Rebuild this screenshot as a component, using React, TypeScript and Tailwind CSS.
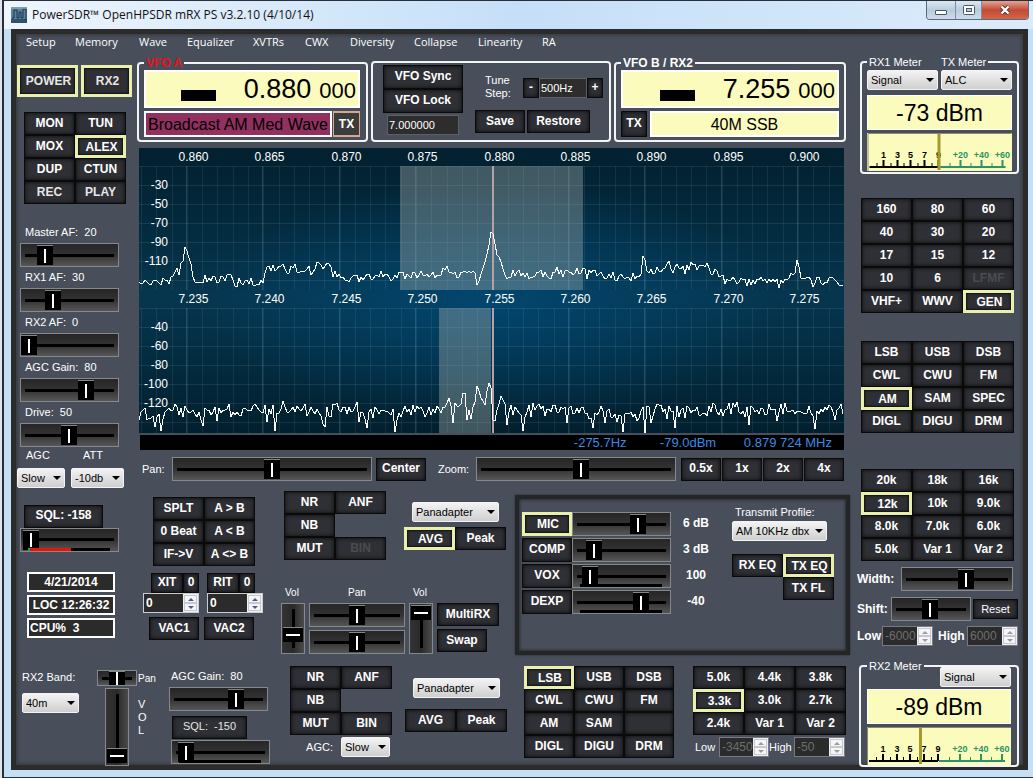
import { useId, type ReactNode } from "react";
import clsx from "clsx";

const sans = "font-['Liberation_Sans',Arial,sans-serif]";
const segoe = "font-['Open_Sans','Noto_Sans',sans-serif]";

/* ---------- controls ---------- */

function Btn({
  children,
  on,
  disabled,
  dim,
  className = "h-[23px] w-[51px]",
  label,
}: {
  children?: ReactNode;
  on?: boolean;
  disabled?: boolean;
  dim?: boolean;
  className?: string;
  label?: string;
}) {
  return (
    <button
      type="button"
      disabled={disabled}
      aria-pressed={on}
      aria-label={label}
      className={clsx(
        "shrink-0 bg-[#2f3035] text-center text-[12px] leading-none font-bold whitespace-nowrap",
        on
          ? "border-[3px] border-[#e9f0ab] pl-[2px] shadow-[inset_0_0_2px_1px_#111]"
          : "pb-[2px] shadow-[inset_0_0_0_1px_#0a0a0b,inset_0_0_4px_1px_#0a0a0b]",
        disabled ? "text-[#4a4b50]" : dim ? "text-[#e6e6e6]" : "text-white",
        className,
      )}
    >
      {children}
    </button>
  );
}

function Slider({
  label,
  value,
  slim,
  className = "w-[99px]",
}: {
  label: string;
  value: number;
  slim?: boolean;
  className?: string;
}) {
  return (
    <input
      type="range"
      aria-label={label}
      defaultValue={value}
      className={clsx(
        "block shrink-0 appearance-none border border-[#85888c]",
        "[background:linear-gradient(#000,#000)_center/calc(100%-8px)_3px_no-repeat,linear-gradient(#262626,#333_50%,#565656)]",
        "[&::-webkit-slider-thumb]:w-[16px] [&::-webkit-slider-thumb]:appearance-none",
        "[&::-webkit-slider-thumb]:border-t [&::-webkit-slider-thumb]:border-[#7d8a88]",
        "[&::-webkit-slider-thumb]:[background:linear-gradient(#fff,#fff)_center/2px_14px_no-repeat,#000]",
        slim ? "h-[16px] [&::-webkit-slider-thumb]:h-[14px]" : "h-[24px] [&::-webkit-slider-thumb]:h-[20px]",
        className,
      )}
    />
  );
}

function VSlider({ label, value, className }: { label: string; value: number; className: string }) {
  return (
    <input
      type="range"
      aria-label={label}
      defaultValue={value}
      className={clsx(
        "block w-[24px] shrink-0 appearance-none border border-[#85888c] [direction:rtl] [writing-mode:vertical-lr]",
        "[background:linear-gradient(#000,#000)_center/3px_calc(100%-10px)_no-repeat,linear-gradient(90deg,#333,#2a2a2a_50%,#4a4a4a)]",
        "[&::-webkit-slider-thumb]:h-[15px] [&::-webkit-slider-thumb]:w-[20px] [&::-webkit-slider-thumb]:appearance-none",
        "[&::-webkit-slider-thumb]:border-t [&::-webkit-slider-thumb]:border-[#7d8a88]",
        "[&::-webkit-slider-thumb]:[background:linear-gradient(#fff,#fff)_center/14px_2px_no-repeat,#000]",
        className,
      )}
    />
  );
}

// slider with a level strip along its lower edge
function LevelSlider({ label, value, level }: { label: string; value: number; level?: boolean }) {
  return (
    <div className="relative w-fit">
      <Slider label={label} value={value} />
      <div className="absolute right-[9px] bottom-px left-[8px] flex h-[3px] bg-black">
        {level && <div className="w-[2px] bg-[#22a04a]" />}
        {level && <div className="w-1/2 bg-[#e8140c]" />}
      </div>
    </div>
  );
}

function LabelledSlider({ text, value }: { text: string; value: number }) {
  return (
    <div className="flex h-[45px] flex-col gap-[3px]">
      <span className="pl-[5px] text-[11px] leading-[15px] whitespace-pre">{text}</span>
      <Slider label={text} value={value} />
    </div>
  );
}

function Select({ label, options, className }: { label: string; options: string[]; className: string }) {
  return (
    <span className={clsx("relative block h-[20px] shrink-0", className)}>
      <select
        aria-label={label}
        className="block h-full w-full appearance-none rounded-[2px] border border-[#f4f4f4] bg-linear-to-b from-[#f3f3f3] to-[#cfcfcf] pl-[3px] text-[11px] text-black"
      >
        {options.map((o) => (
          <option key={o}>{o}</option>
        ))}
      </select>
      <svg viewBox="0 0 8 4" className="pointer-events-none absolute top-[8px] right-[4px] h-[4px] w-[8px]">
        <path d="M0 0h8L4 4z" fill="#000" />
      </svg>
    </span>
  );
}

function Spinner({
  label,
  value,
  disabled,
  className,
}: {
  label: string;
  value: string;
  disabled?: boolean;
  className: string;
}) {
  const arrow = disabled ? "#9a9a9a" : "#4d5a8a";
  return (
    <span className={clsx("flex h-[20px] shrink-0 border", disabled ? "border-[#777a80]" : "border-[#c9ccd0]", className)}>
      <input
        type="text"
        aria-label={label}
        defaultValue={value}
        disabled={disabled}
        className={clsx(
          "min-w-0 flex-1 bg-[#2b2b2b] pl-[2px] text-[12px]",
          disabled ? "font-normal text-[#6d6e70]" : "font-bold text-white",
        )}
      />
      <span className="flex w-[15px] flex-col bg-[#f0f0f0] p-px">
        <button type="button" disabled={disabled} aria-label={`${label} up`} className="flex flex-1 items-center justify-center border border-[#c4c8d4] bg-[#f5f5f5]">
          <svg viewBox="0 0 6 3" className="h-[3px] w-[6px]">
            <path d="M3 0l3 3H0z" fill={arrow} />
          </svg>
        </button>
        <button type="button" disabled={disabled} aria-label={`${label} down`} className="flex flex-1 items-center justify-center border border-[#c4c8d4] bg-[#f5f5f5]">
          <svg viewBox="0 0 6 3" className="h-[3px] w-[6px]">
            <path d="M0 0h6L3 3z" fill={arrow} />
          </svg>
        </button>
      </span>
    </span>
  );
}

type Cell = string | null;

function ButtonGrid({
  cells,
  active = [],
  disabled = [],
  dim = [],
  className,
}: {
  cells: Cell[];
  active?: string[];
  disabled?: string[];
  dim?: string[];
  className: string;
}) {
  return (
    <div className={clsx("grid shrink-0", className)}>
      {cells.map((c, i) =>
        c === null ? (
          <span key={i} />
        ) : (
          <Btn
            key={i}
            on={active.includes(c)}
            disabled={disabled.includes(c)}
            dim={dim.includes(c)}
            label={c || "unused"}
            className="h-[23px] w-full"
          >
            {c}
          </Btn>
        ),
      )}
    </div>
  );
}

function Group({ legend, children, className }: { legend: ReactNode; children: ReactNode; className: string }) {
  return (
    <fieldset className={clsx("min-w-0 shrink-0 rounded-[4px] border-2 border-[#f2f4f6]", className)}>
      <legend className="px-[2px] leading-[14px] whitespace-pre">{legend}</legend>
      {children}
    </fieldset>
  );
}

/* ---------- window frame ---------- */

function TitleBar() {
  return (
    <header className="flex h-[28px] items-start justify-between bg-linear-to-r from-[#eef5fc] via-[#c5dff8] to-[#dcebfa] pr-[4px] pl-[7px]">
      <div className="flex items-center gap-[5px] pt-[5px]">
        <svg viewBox="0 0 16 16" className="h-[16px] w-[16px]">
          <rect width="16" height="16" fill="#5d8199" />
          <rect y="12" width="16" height="4" fill="#30536b" />
          <path d="M1 11h2V3h3v8h2V5h2v6h2V2h3v12" fill="none" stroke="#17374d" />
          <path d="M0 1h16" stroke="#9fc0d4" />
        </svg>
        <h1 className={clsx("text-[12px] leading-[18px] text-[#111]", segoe)}>
          PowerSDR™ OpenHPSDR mRX PS v3.2.10 (4/10/14)
        </h1>
      </div>
      <div className="flex h-[19px] overflow-hidden rounded-b-[4px] border border-t-0 border-[#5a6b80]">
        <button type="button" aria-label="Minimize" className="flex w-[28px] items-center justify-center bg-linear-to-b from-[#dbe7f3] via-[#b9cbdd] to-[#cddcec]">
          <span className="mt-[5px] h-[5px] w-[12px] rounded-[1px] border border-[#48566a] bg-white" />
        </button>
        <button type="button" aria-label="Maximize" className="flex w-[27px] items-center justify-center border-x border-[#7d8fa5] bg-linear-to-b from-[#dbe7f3] via-[#b9cbdd] to-[#cddcec]">
          <svg viewBox="0 0 12 10" className="h-[10px] w-[12px]">
            <rect x=".5" y=".5" width="11" height="9" rx="1" fill="#fff" stroke="#48566a" />
            <rect x="3.5" y="3.5" width="5" height="3" fill="#b9cbdd" stroke="#48566a" />
          </svg>
        </button>
        <button type="button" aria-label="Close" className="flex w-[46px] items-center justify-center bg-linear-to-b from-[#e0a396] via-[#c34a35] to-[#d2664a]">
          <svg viewBox="0 0 12 10" className="h-[10px] w-[12px]">
            <path d="M2.500 1.500l7 7M9.500 1.500l-7 7" stroke="#5a2a26" strokeWidth="4" />
            <path d="M2.500 1.500l7 7M9.500 1.500l-7 7" stroke="#fff" strokeWidth="2.400" />
          </svg>
        </button>
      </div>
    </header>
  );
}

const menu = [
  { text: "Setup", w: "w-[49px]" },
  { text: "Memory", w: "w-[64px]" },
  { text: "Wave", w: "w-[48px]" },
  { text: "Equalizer", w: "w-[66px]" },
  { text: "XVTRs", w: "w-[52px]" },
  { text: "CWX", w: "w-[45px]" },
  { text: "Diversity", w: "w-[64px]" },
  { text: "Collapse", w: "w-[64px]" },
  { text: "Linearity", w: "w-[64px]" },
  { text: "RA", w: "w-[40px]" },
];

function MenuBar() {
  return (
    <nav className={clsx("flex h-[20px] pt-[6px] pl-[9px] text-[11px] leading-[14px]", segoe)}>
      {menu.map((m) => (
        <button key={m.text} type="button" className={clsx("shrink-0 text-left", m.w)}>
          {m.text}
        </button>
      ))}
    </nav>
  );
}

/* ---------- VFOs ---------- */

function Frequency({ mhz, hz }: { mhz: string; hz: string }) {
  return (
    <div className="flex h-[38px] items-center justify-end border-2 border-white bg-[#fbfbbe] pr-[2px] text-black">
      <span className="mt-[13px] mr-[28px] h-[11px] w-[35px] bg-black" />
      <span className="text-[27px] leading-[38px]">{mhz}</span>
      <span className="pt-[4px] pl-[8px] text-[22px] leading-[34px]">{hz}</span>
    </div>
  );
}

function VfoRow() {
  return (
    <div className="-ml-[2px] flex w-[709px] items-end gap-[3px]">
      <Group
        legend={<span className="text-[12px] font-bold text-[#e8101c]">VFO A</span>}
        className="h-[87px] w-[231px] pr-[6px] pl-[5px]"
      >
        <Frequency mhz="0.880" hz="000" />
        <div className="mt-[3px] flex justify-between">
          <div className="h-[26px] w-[188px] border-2 border-white bg-[#92305f] text-center text-[16px] leading-[23px] whitespace-nowrap text-black">
            Broadcast AM Med Wave
          </div>
          <button type="button" className="h-[26px] w-[27px] border border-y-2 border-[#d9a58c] bg-[#3b3c3c] text-[12px] font-bold">
            TX
          </button>
        </div>
      </Group>

      <div className="flex h-[81px] w-[240px] shrink-0 rounded-[4px] border-2 border-[#f2f4f6] pt-[2px] pl-[10px]">
        <div className="flex w-[80px] flex-col">
          <Btn className="h-[24px] w-[80px]">VFO Sync</Btn>
          <Btn className="h-[24px] w-[80px]">VFO Lock</Btn>
          <input
            type="text"
            aria-label="Saved frequency"
            defaultValue="7.000000"
            className="mt-[2px] ml-[4px] h-[20px] w-[72px] border border-[#5c5f64] bg-[#2d2d2e] pl-px text-[11px]"
          />
        </div>
        <div className="pl-[12px]">
          <div className="flex h-[43px] items-center">
            <span className="w-[38px] pl-[10px] text-[11px] leading-[13px]">Tune Step:</span>
            <div className="ml-[10px] flex pt-[2px]">
              <Btn className="h-[20px] w-[16px]" label="Step down">-</Btn>
              <input
                type="text"
                aria-label="Tune step"
                defaultValue="500Hz"
                className="h-[20px] w-[48px] border border-[#5c5f64] bg-[#2d2d2e] pl-px text-[11px]"
              />
              <Btn className="h-[20px] w-[16px]" label="Step up">+</Btn>
            </div>
          </div>
          <div className="mt-[2px] flex gap-[2px]">
            <Btn className="h-[23px] w-[50px]">Save</Btn>
            <Btn className="h-[23px] w-[63px]">Restore</Btn>
          </div>
        </div>
      </div>

      <Group legend={<span className="text-[12px] font-bold">VFO B / RX2</span>} className="h-[87px] w-[232px] pr-[5px] pl-[5px]">
        <div className="w-[218px]">
          <Frequency mhz="7.255" hz="000" />
        </div>
        <div className="mt-[3px] flex justify-between">
          <Btn className="h-[26px] w-[26px]">TX</Btn>
          <div className="h-[26px] w-[189px] border-2 border-white bg-[#fbfbbe] text-center text-[16px] leading-[23px] text-black">
            40M SSB
          </div>
        </div>
      </Group>
    </div>
  );
}

/* ---------- spectrum ---------- */

type Point = [number, number];

function noise(seed: number) {
  let s = seed;
  return () => {
    s = (s * 1103515245 + 12345) % 2147483648;
    return s / 2147483648 - 0.5;
  };
}

function levelAt(env: Point[], x: number) {
  for (let i = 1; i < env.length; i++) {
    const [x0, y0] = env[i - 1];
    const [x1, y1] = env[i];
    if (x <= x1) return y0 + ((y1 - y0) * (x - x0)) / (x1 - x0);
  }
  return env[env.length - 1][1];
}

function trace(env: Point[], marks: Point[], amp: number, seed: number) {
  const rnd = noise(seed);
  const pts: Point[] = [];
  for (let x = 0; x <= 705; x += 2) {
    pts.push([x, Math.round(levelAt(env, x) + rnd() * amp + rnd() * amp)]);
  }
  for (const [mx, my] of marks) {
    const p = pts[Math.round(mx / 2)];
    if (p) p[1] = my;
  }
  return pts.map((p) => p.join(",")).join(" ");
}

const rx1Env: Point[] = [
  [0, 132], [18, 135], [32, 131], [39, 125], [43, 116], [47, 101], [50, 115], [54, 125], [57, 132],
  [88, 129], [95, 133], [124, 134], [127, 122], [165, 122], [180, 119], [192, 121], [199, 129],
  [300, 127], [308, 122], [316, 126], [333, 124], [340, 134], [347, 111], [353, 84], [357, 104],
  [364, 122], [370, 129], [381, 123], [390, 130], [400, 122], [408, 129], [420, 124], [460, 125],
  [478, 131], [500, 127], [503, 125], [505, 108], [508, 123], [530, 120], [574, 120], [580, 126],
  [584, 133], [630, 132], [642, 134], [655, 126], [658, 112], [662, 125], [675, 134], [705, 133],
];
const rx1Marks: Point[] = [[46, 99], [352, 84], [504, 108], [658, 112], [308, 118], [338, 137], [640, 140]];

const rx2Env: Point[] = [
  [0, 264], [20, 267], [30, 261], [60, 264], [200, 262], [290, 263], [310, 257], [327, 252], [333, 264],
  [339, 239], [346, 256], [350, 235], [355, 272], [360, 256], [375, 266], [400, 260], [470, 266],
  [500, 264], [600, 262], [705, 263],
];
const rx2Marks: Point[] = [
  [16, 279], [22, 283], [64, 278], [78, 273], [128, 274], [136, 283], [184, 276], [186, 279], [220, 274],
  [228, 280], [256, 284], [258, 272], [314, 275], [328, 272], [332, 271], [338, 238], [340, 243],
  [342, 250], [344, 253], [346, 257], [348, 243], [350, 235], [352, 240],
  [354, 272], [368, 277], [384, 283], [416, 257], [428, 275], [454, 280], [466, 275], [484, 284],
  [506, 285], [512, 275], [536, 280], [598, 254], [610, 277], [638, 273], [676, 281], [696, 272],
];

const rx1Freqs = ["0.860", "0.865", "0.870", "0.875", "0.880", "0.885", "0.890", "0.895", "0.900"];
const rx2Freqs = ["7.235", "7.240", "7.245", "7.250", "7.255", "7.260", "7.265", "7.270", "7.275"];

function Panadapter({ top, height, freqs, levels }: { top: number; height: number; freqs: string[]; levels: string[] }) {
  const majors = freqs.map((_, i) => 47.5 + Math.round(i * 76.4));
  const minors = Array.from({ length: 46 }, (_, i) => Math.round(2 + i * 15.280) + 0.5);
  return (
    <g>
      {minors.map((x) => (
        <path key={x} d={`M${x} ${top}v${height}`} stroke="#9fc8dc" strokeOpacity=".1" />
      ))}
      {majors.map((x) => (
        <path key={x} d={`M${x} ${top}v${height}`} stroke="#9fc8dc" strokeOpacity=".2" />
      ))}
      {[0, 1, 2, 3, 4, 5, 6].map((i) => (
        <path key={i} d={`M0 ${top + i * 19 + 0.5}h705`} stroke="#9fc8dc" strokeOpacity=".12" />
      ))}
      {freqs.map((f, i) => (
        <text key={f} x={majors[i] + 7} y={top - 5} textAnchor="middle">
          {f}
        </text>
      ))}
      {levels.map((l, i) => (
        <text key={l} x="29" y={top + 23 + i * 19} textAnchor="end">
          {l}
        </text>
      ))}
    </g>
  );
}

function Display() {
  return (
    <div className="mt-[6px] w-[705px]">
      <svg viewBox="0 0 705 285" className="block h-auto w-full" fill="#fff" fontSize="12">
        <defs>
          <linearGradient id="sky" x1="0" y1="0" x2="0" y2="1">
            <stop offset="0" stopColor="#02202f" />
            <stop offset=".25" stopColor="#03293c" />
            <stop offset=".52" stopColor="#06364f" />
            <stop offset=".75" stopColor="#032b3f" />
            <stop offset="1" stopColor="#021f2e" />
          </linearGradient>
          <radialGradient id="glow" cx=".5" cy=".54" r=".42">
            <stop offset="0" stopColor="#004f80" stopOpacity=".65" />
            <stop offset="1" stopColor="#004f80" stopOpacity="0" />
          </radialGradient>
        </defs>
        <rect width="705" height="285" fill="url(#sky)" />
        <rect width="705" height="285" fill="url(#glow)" />
        <Panadapter top={18} height={124} freqs={rx1Freqs} levels={["-30", "-50", "-70", "-90", "-110"]} />
        <Panadapter top={160} height={125} freqs={rx2Freqs} levels={["-40", "-60", "-80", "-100", "-120"]} />
        <rect x="261" y="18" width="183" height="124" fill="#a9b4b0" fillOpacity=".38" />
        <rect x="300" y="160" width="52" height="125" fill="#a9b4b0" fillOpacity=".38" />
        <path d="M354 18v124M354 160v125" stroke="#b0a4a4" strokeWidth="2" />
        <g fill="none" stroke="#fff" strokeWidth="1" shapeRendering="crispEdges">
          <polyline points={trace(rx1Env, rx1Marks, 7, 77)} />
          <polyline points={trace(rx2Env, rx2Marks, 10, 4242)} />
        </g>
      </svg>
      <div className="mt-[2px] ml-px flex h-[15px] justify-end bg-black pr-[12px] text-[13px] leading-[16px] text-[#3b8be6]">
        <span className="w-[86px]">-275.7Hz</span>
        <span className="w-[84px]">-79.0dBm</span>
        <span>0.879 724 MHz</span>
      </div>
    </div>
  );
}

function PanZoom() {
  return (
    <div className="mt-[7px] flex h-[24px] w-[705px] items-center pl-[3px] text-[11px]">
      <span className="w-[30px]">Pan:</span>
      <Slider label="Pan" value={50} className="w-[200px]" />
      <Btn className="ml-[4px] h-[23px] w-[50px]">Center</Btn>
      <span className="ml-[12px] w-[38px]">Zoom:</span>
      <Slider label="Zoom" value={53} className="w-[200px]" />
      <div className="ml-[5px] flex gap-px">
        {["0.5x", "1x", "2x", "4x"].map((z) => (
          <Btn key={z} className="h-[23px] w-[40px]">
            {z}
          </Btn>
        ))}
      </div>
    </div>
  );
}

/* ---------- left column ---------- */

const gains = [
  { text: "Master AF:  20", value: 20 },
  { text: "RX1 AF:  30", value: 30 },
  { text: "RX2 AF:  0", value: 0 },
  { text: "AGC Gain:  80", value: 70 },
  { text: "Drive:  50", value: 49 },
];

function LeftColumn() {
  return (
    <aside className="w-[122px] shrink-0 pt-[16px]">
      <div className="flex gap-[3px]">
        <Btn on dim className="h-[32px] w-[61px]">POWER</Btn>
        <Btn on dim className="h-[32px] w-[51px]">RX2</Btn>
      </div>
      <ButtonGrid
        className="mt-[15px] ml-[7px] w-[102px] grid-cols-2"
        cells={["MON", "TUN", "MOX", "ALEX", "DUP", "CTUN", "REC", "PLAY"]}
        active={["ALEX"]}
        dim={["REC", "PLAY"]}
      />
      <div className="mt-[21px] ml-[3px]">
        {gains.map((g) => (
          <LabelledSlider key={g.text} text={g.text} value={g.value} />
        ))}
      </div>
      <div className="-mt-[2px] flex gap-[6px] text-[11px] leading-[15px]">
        <label className="w-[48px]">
          <span className="mb-[5px] block pl-[9px]">AGC</span>
          <Select label="AGC" options={["Slow", "Med", "Fast"]} className="w-[48px]" />
        </label>
        <label className="w-[53px]">
          <span className="mb-[5px] block pl-[12px]">ATT</span>
          <Select label="ATT" options={["-10db", "0db"]} className="w-[53px]" />
        </label>
      </div>
      <div className="mt-[14px] ml-[3px]">
        <Btn className="ml-[4px] h-[23px] w-[79px]">SQL: -158</Btn>
        <LevelSlider label="Squelch" value={3} level />
      </div>
      <div className="mt-[20px] ml-[10px] flex w-[88px] flex-col gap-[3px] text-[12px] leading-[16px] font-bold">
        {["4/21/2014", "LOC 12:26:32", "CPU%  3"].map((t, i) => (
          <div
            key={t}
            className={clsx("h-[20px] border-2 border-white bg-[#2b2b2b] whitespace-pre", i === 2 ? "pl-px" : "text-center")}
          >
            {t}
          </div>
        ))}
      </div>
    </aside>
  );
}

/* ---------- middle block ---------- */

function VfoTools() {
  return (
    <div className="w-[120px] shrink-0 pt-[6px]">
      <ButtonGrid
        className="ml-[10px] w-[102px] grid-cols-2"
        cells={["SPLT", "A > B", "0 Beat", "A < B", "IF->V", "A <> B"]}
      />
      <div className="mt-[7px] flex gap-[8px]">
        {["XIT", "RIT"].map((t, i) => (
          <div key={t} className="w-[56px]">
            <div className={clsx("flex", i === 0 && "justify-end")}>
              <Btn className="h-[20px] w-[32px]">{t}</Btn>
              <Btn className="h-[20px] w-[16px]" label={`Clear ${t}`}>0</Btn>
            </div>
            <Spinner label={t} value="0" className="w-[56px]" />
          </div>
        ))}
      </div>
      <div className="mt-[4px] ml-[6px] flex gap-[5px]">
        <Btn className="h-[23px] w-[50px]">VAC1</Btn>
        <Btn className="h-[23px] w-[50px]">VAC2</Btn>
      </div>
    </div>
  );
}

function DisplayMode({ avg, label }: { avg?: boolean; label: string }) {
  return (
    <div className="w-[102px] shrink-0">
      <Select label={label} options={["Panadapter", "Waterfall"]} className="ml-[8px] w-[87px]" />
      <div className={clsx("flex", avg ? "mt-[5px]" : "mt-[11px]")}>
        <Btn on={avg}>AVG</Btn>
        <Btn>Peak</Btn>
      </div>
    </div>
  );
}

function Rx1Tools() {
  return (
    <div className="ml-[18px] w-[234px] shrink-0">
      <div className="flex">
        <ButtonGrid
          className="ml-[3px] w-[102px] grid-cols-2"
          cells={["NR", "ANF", "NB", null, "MUT", "BIN"]}
          disabled={["BIN"]}
        />
        <div className="pt-[11px] pl-[18px]">
          <DisplayMode avg label="RX1 display mode" />
        </div>
      </div>
      <div className="mt-[27px] flex gap-[4px] text-[10px] leading-[12px]">
        <div>
          <span className="mb-[4px] block pl-[4px]">Vol</span>
          <VSlider label="Main volume" value={32} className="h-[51px]" />
        </div>
        <div>
          <span className="mb-[4px] block text-center">Pan</span>
          <div className="flex flex-col gap-[3px]">
            <Slider label="Main pan" value={50} className="w-[96px]" />
            <Slider label="Sub pan" value={50} className="w-[96px]" />
          </div>
        </div>
        <div>
          <span className="mb-[4px] block pl-[4px]">Vol</span>
          <VSlider label="Sub volume" value={98} className="h-[51px]" />
        </div>
        <div className="flex flex-col gap-[3px] pt-[16px]">
          <Btn className="h-[23px] w-[62px]">MultiRX</Btn>
          <Btn className="h-[23px] w-[50px]">Swap</Btn>
        </div>
      </div>
    </div>
  );
}

const txRows = [
  { name: "MIC", value: 70, read: "6 dB", on: true },
  { name: "COMP", value: 16, read: "3 dB" },
  { name: "VOX", value: 11, read: "100", level: true },
  { name: "DEXP", value: 74, read: "-40", level: true },
];

function Transmit() {
  return (
    <section className="mt-[4px] flex h-[160px] w-[335px] shrink-0 border-4 border-[#232527] pt-[13px] pl-[3px] shadow-[inset_0_0_3px_1px_#2a2c30,0_0_2px_#2a2c30]">
      <div className="flex flex-col gap-[2px]">
        {txRows.map((r) => (
          <div key={r.name} className="flex h-[24px]">
            <Btn on={r.on} className="h-[24px] w-[50px]">{r.name}</Btn>
            {r.level ? <LevelSlider label={r.name} value={r.value} /> : <Slider label={r.name} value={r.value} />}
            <span className="w-[50px] text-center text-[12px] leading-[22px] font-bold">{r.read}</span>
          </div>
        ))}
      </div>
      <div className="pl-[11px]">
        <label className="block text-[11px] leading-[13px]">
          <span className="-mt-[6px] mb-[2px] block pl-[3px]">Transmit Profile:</span>
          <Select label="Transmit Profile" options={["AM 10KHz dbx", "Default"]} className="w-[95px]" />
        </label>
        <ButtonGrid
          className="mt-[13px] w-[102px] grid-cols-2"
          cells={["RX EQ", "TX EQ", null, "TX FL"]}
          active={["TX EQ"]}
        />
      </div>
    </section>
  );
}

/* ---------- second receiver strip ---------- */

function Rx2Strip() {
  return (
    <div className="mt-[10px] flex">
      <label className="ml-[5px] w-[58px] shrink-0 pt-[5px] text-[11px] leading-[15px] whitespace-nowrap">
        <span className="mb-[8px] block">RX2 Band:</span>
        <Select label="RX2 band" options={["40m", "80m"]} className="w-[57px]" />
      </label>
      <div className="ml-[17px] w-[57px] shrink-0 pt-[5px] text-[10px]">
        <div className="flex items-center gap-px leading-[15px]">
          <Slider label="RX2 pan" value={49} slim className="w-[40px]" />
          <span>Pan</span>
        </div>
        <div className="mt-[2px] ml-[8px] flex gap-[9px]">
          <VSlider label="RX2 volume" value={3} className="h-[78px]" />
          <span className="w-[8px] pt-[10px] text-[11px] leading-[13px] break-all">VOL</span>
        </div>
      </div>
      <div className="ml-[15px] w-[101px] shrink-0 pt-[4px]">
        <span className="block pl-[2px] text-[11px] leading-[15px] whitespace-pre">AGC Gain:  80</span>
        <div className="pt-[3px]">
          <Slider label="RX2 AGC gain" value={71} />
        </div>
        <button
          type="button"
          className="mt-[5px] ml-[3px] block h-[23px] w-[75px] bg-[#2f3035] pb-[2px] text-[11px] whitespace-pre text-[#e6e6e6] shadow-[inset_0_0_0_1px_#0a0a0b,inset_0_0_4px_1px_#0a0a0b]"
        >
          SQL:  -150
        </button>
        <div className="ml-[2px] pt-px">
          <LevelSlider label="RX2 squelch" value={8} />
        </div>
      </div>
      <div className="ml-[20px] w-[102px] shrink-0 pt-px">
        <ButtonGrid className="grid-cols-2" cells={["NR", "ANF", "NB", null, "MUT", "BIN"]} />
        <label className="mt-[2px] flex items-center justify-end gap-[8px] pr-[2px] text-[11px]">
          AGC:
          <Select label="RX2 AGC" options={["Slow", "Med", "Fast"]} className="w-[49px]" />
        </label>
      </div>
      <div className="ml-[13px] pt-[13px]">
        <DisplayMode label="RX2 display mode" />
      </div>
      <ButtonGrid
        className="mt-px ml-[17px] w-[150px] grid-cols-3 self-start"
        cells={["LSB", "USB", "DSB", "CWL", "CWU", "FM", "AM", "SAM", "", "DIGL", "DIGU", "DRM"]}
        active={["LSB"]}
      />
      <div className="ml-[19px] w-[153px] shrink-0 pt-px">
        <ButtonGrid
          className="grid-cols-3"
          cells={["5.0k", "4.4k", "3.8k", "3.3k", "3.0k", "2.7k", "2.4k", "Var 1", "Var 2"]}
          active={["3.3k"]}
        />
        <div className="mt-[2px] flex items-center text-[11px] whitespace-nowrap">
          <span className="w-[26px] pl-[2px]">Low</span>
          <Spinner label="RX2 low" value="-3450" disabled className="w-[50px]" />
          <span className="w-[25px]">High</span>
          <Spinner label="RX2 high" value="-50" disabled className="w-[51px]" />
        </div>
      </div>
    </div>
  );
}

/* ---------- right column ---------- */

const scale = [
  { x: 16, t: "1" },
  { x: 30, t: "3" },
  { x: 43, t: "5" },
  { x: 57, t: "7" },
  { x: 71, t: "9" },
  { x: 93, t: "+20" },
  { x: 114, t: "+40" },
  { x: 135, t: "+60" },
];

function SMeter({ needle }: { needle: number }) {
  const id = useId();
  return (
    <svg viewBox="0 0 144 38" role="img" aria-labelledby={id} className="mt-[3px] block h-[38px] w-full bg-[#fbfbbe]" fontSize="9" fontWeight="bold">
      <title id={id}>Signal meter</title>
      <path d="M.5 38V.5H144" fill="none" stroke="#8a8a70" />
      <path d="M2 34h69" stroke="#000" strokeWidth="2" />
      <path d="M72 34h66" stroke="#2a9468" strokeWidth="2" />
      {scale.map((s, i) => (
        <g key={s.t} fill={i > 4 ? "#2a9468" : "#000"}>
          <rect x={s.x - 1} y="27" width="2" height="7" />
          <rect x={s.x - (i > 4 ? 11 : 7)} y="30" width="1" height="4" />
          <text x={s.x} y="25" textAnchor="middle">
            {s.t}
          </text>
        </g>
      ))}
      <rect x={needle - 1} y="1" width="3" height="36" fill="#a39a2c" />
    </svg>
  );
}

function Readout({ children }: { children: ReactNode }) {
  return (
    <div className="h-[35px] border border-white bg-[#fbfbbe] text-center text-[23px] leading-[34px] text-black">
      {children}
    </div>
  );
}

function RightColumn() {
  return (
    <aside className="w-[162px] shrink-0 pt-[6px]">
      <Group
        legend={
          <span className="flex text-[11px]">
            <span className="w-[72px]">RX1 Meter</span>
            <span>TX Meter</span>
          </span>
        }
        className="ml-[3px] h-[119px] w-[159px] px-[5px]"
      >
        <div className="flex justify-between pt-px pb-[5px]">
          <Select label="RX1 meter" options={["Signal", "Avg"]} className="w-[71px]" />
          <Select label="TX meter" options={["ALC", "Power"]} className="w-[71px]" />
        </div>
        <Readout>-73 dBm</Readout>
        <SMeter needle={71} />
      </Group>

      <div className="ml-[4px] w-[153px]">
        <ButtonGrid
          className="mt-[24px] grid-cols-3"
          cells={["160", "80", "60", "40", "30", "20", "17", "15", "12", "10", "6", "LFMF", "VHF+", "WWV", "GEN"]}
          active={["GEN"]}
          disabled={["LFMF"]}
        />
        <ButtonGrid
          className="mt-[28px] grid-cols-3"
          cells={["LSB", "USB", "DSB", "CWL", "CWU", "FM", "AM", "SAM", "SPEC", "DIGL", "DIGU", "DRM"]}
          active={["AM"]}
        />
        <ButtonGrid
          className="mt-[36px] grid-cols-3"
          cells={["20k", "18k", "16k", "12k", "10k", "9.0k", "8.0k", "7.0k", "6.0k", "5.0k", "Var 1", "Var 2"]}
          active={["12k"]}
        />
      </div>

      <div className="text-[12px] font-bold whitespace-nowrap">
        <div className="mt-[6px] flex items-center">
          <span className="w-[44px]">Width:</span>
          <Slider label="Width" value={60} className="w-[112px]" />
        </div>
        <div className="mt-[6px] flex items-center">
          <span className="w-[34px]">Shift:</span>
          <Slider label="Shift" value={49} className="w-[80px]" />
          <button
            type="button"
            className="ml-[2px] h-[20px] w-[45px] bg-[#2f3035] text-[11px] font-normal shadow-[inset_0_0_0_1px_#0a0a0b,inset_0_0_4px_1px_#0a0a0b]"
          >
            Reset
          </button>
        </div>
        <div className="mt-[5px] flex items-center">
          <span className="w-[25px]">Low</span>
          <Spinner label="Low" value="-6000" disabled className="w-[51px]" />
          <span className="w-[34px] pl-[5px]">High</span>
          <Spinner label="High" value="6000" disabled className="w-[51px]" />
        </div>
      </div>

      <Group legend={<span className="text-[11px]">RX2 Meter</span>} className="mt-[12px] ml-[2px] h-[109px] w-[160px] px-[6px]">
        <div className="-mt-[6px] mb-[2px] flex justify-end">
          <Select label="RX2 meter" options={["Signal", "Avg"]} className="w-[71px]" />
        </div>
        <Readout>-89 dBm</Readout>
        <SMeter needle={53} />
      </Group>
    </aside>
  );
}

export default function App() {
  return (
    <div className={clsx("min-h-screen border-l-2 border-[#dfe4ea] bg-[#c5dff6] text-white", sans)}>
      <div className="min-h-screen border-t border-b border-l-2 border-[#27303a] pr-[5px] pl-[7px]">
        <div className="-mr-[5px] -ml-[7px]">
          <TitleBar />
        </div>
        <main className="bg-[#484f5b] pr-[9px] pb-[3px] pl-[6px] shadow-[inset_0_0_0_5px_#2b2b2b,inset_0_0_3px_7px_#3b3e42]">
          <MenuBar />
          <div className="flex">
            <div className="min-w-0 flex-1">
              <div className="flex">
                <LeftColumn />
                <div className="min-w-0 flex-1 pt-[6px]">
                  <VfoRow />
                  <Display />
                  <PanZoom />
                  <div className="mt-[10px] flex pl-[4px]">
                    <VfoTools />
                    <Rx1Tools />
                    <Transmit />
                  </div>
                </div>
              </div>
              <Rx2Strip />
            </div>
            <RightColumn />
          </div>
        </main>
      </div>
    </div>
  );
}
